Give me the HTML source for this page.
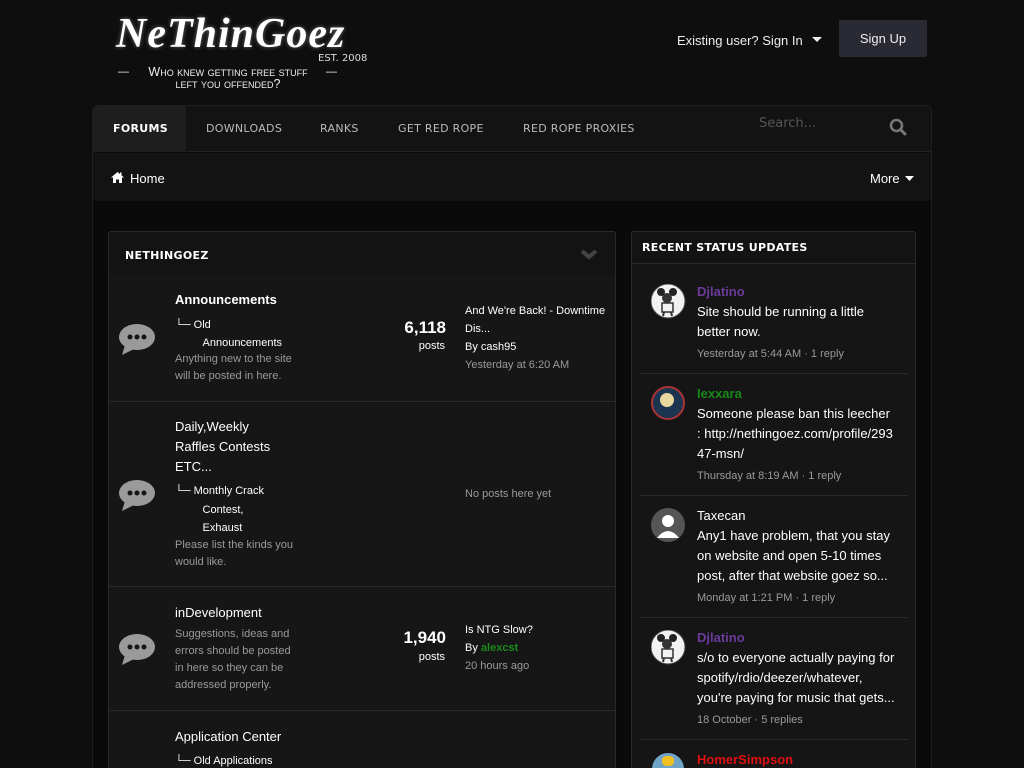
<!DOCTYPE html>
<html><head><meta charset="utf-8"><style>
*{margin:0;padding:0;box-sizing:border-box}
html,body{width:1024px;height:768px;overflow:hidden}
body{background:#0e0e0e;font-family:"Liberation Sans",Arial,sans-serif;color:#fff;position:relative}
.a{position:absolute;white-space:nowrap}
.nav{font-family:"DejaVu Sans",sans-serif;font-size:11px;color:#bbb;letter-spacing:.3px}
.t13{font-size:13px;line-height:20px}
.t11{font-size:11px;line-height:17px}
.g{color:#9a9a9a}
.sep{position:absolute;height:1px;background:#2a2a2a}
</style></head><body>
<div class="a" style="left:116px;top:10px;font-family:'Liberation Serif',serif;font-style:italic;font-weight:bold;font-size:42px;color:#fff;text-shadow:0 0 4px rgba(255,255,255,.4);letter-spacing:1px">NeThinGoez</div>
<div class="a" style="left:318px;top:53px;font-size:10px;color:#ddd;font-family:'DejaVu Sans',sans-serif">EST. 2008</div>
<div class="a" style="left:118px;top:66px;font-size:11px;color:#eee">—</div>
<div class="a" style="left:326px;top:66px;font-size:11px;color:#eee">—</div>
<div class="a" style="left:138px;top:66px;width:180px;text-align:center;font-size:12.5px;line-height:12px;color:#eee;font-family:'Liberation Sans',sans-serif;font-variant:small-caps;white-space:normal">Who knew getting free stuff<br>left you offended?</div>
<div class="a" style="left:677px;top:33px;font-size:13px;color:#eee">Existing user? Sign In</div>
<svg class="a" style="left:812px;top:37px" width="10" height="6"><path d="M0 0H10L5 5Z" fill="#eee"/></svg>
<div class="a" style="left:839px;top:20px;width:88px;height:37px;background:#2a2a34;border-radius:2px;font-size:13px;color:#eee;text-align:center;line-height:37px">Sign Up</div>
<div class="a" style="left:92px;top:105px;width:840px;height:680px;background:#0a0a0a;border:1px solid #1f1f1f;border-radius:6px 6px 0 0"></div>
<div class="a" style="left:93px;top:106px;width:838px;height:46px;background:#131313;border-radius:6px 6px 0 0;border-bottom:1px solid #222"></div>
<div class="a" style="left:93px;top:106px;width:93px;height:46px;background:#1e1e1e;border-radius:6px 0 0 0"></div>
<div class="a nav" style="left:113px;top:122px;color:#fff;font-weight:bold">FORUMS</div>
<div class="a nav" style="left:206px;top:122px">DOWNLOADS</div>
<div class="a nav" style="left:320px;top:122px">RANKS</div>
<div class="a nav" style="left:398px;top:122px">GET RED ROPE</div>
<div class="a nav" style="left:523px;top:122px">RED ROPE PROXIES</div>
<div class="a" style="left:759px;top:116px;font-family:'DejaVu Sans',sans-serif;font-size:13px;color:#555">Search...</div>
<svg class="a" style="left:889px;top:118px" width="18" height="18"><circle cx="7.5" cy="7.5" r="5.5" stroke="#777" stroke-width="2.6" fill="none"/><path d="M11.5 11.5L16 16" stroke="#777" stroke-width="3" stroke-linecap="round"/></svg>
<div class="a" style="left:93px;top:153px;width:838px;height:48px;background:#131313"></div>
<svg class="a" style="left:111px;top:172px" width="13" height="11"><path d="M6.5 0L0 5.5H2V11H5V7.5H8V11H11V5.5H13L10.5 3.3V0.5H9V2L6.5 0Z" fill="#fff"/></svg>
<div class="a" style="left:130px;top:171px;font-size:13px;color:#fff">Home</div>
<div class="a" style="left:870px;top:171px;font-size:13px;color:#fff">More</div>
<svg class="a" style="left:905px;top:176px" width="9" height="5"><path d="M0 0H9L4.5 5Z" fill="#fff"/></svg>
<div class="a" style="left:108px;top:231px;width:508px;height:540px;background:#161616;border:1px solid #2a2a2a;border-radius:3px"></div>
<div class="a" style="left:109px;top:232px;width:506px;height:43px;background:#131313"></div>
<div class="a" style="left:125px;top:249px;font-family:'DejaVu Sans',sans-serif;font-weight:bold;font-size:11px;color:#fff;letter-spacing:.3px">NETHINGOEZ</div>
<svg class="a" style="left:580px;top:249px" width="18" height="11"><path d="M2 2L9 8L16 2" stroke="#444" stroke-width="4" fill="none"/></svg>
<div class="sep" style="left:109px;top:401px;width:506px"></div>
<div class="sep" style="left:109px;top:586px;width:506px"></div>
<div class="sep" style="left:109px;top:710px;width:506px"></div>
<svg width="0" height="0" style="position:absolute"><defs><g id="bub"><ellipse cx="18" cy="13" rx="18" ry="13" fill="#9a9a9a"/><path d="M6 21L3 31L15 25Z" fill="#9a9a9a"/><circle cx="11" cy="13" r="2.5" fill="#161616"/><circle cx="18" cy="13" r="2.5" fill="#161616"/><circle cx="25" cy="13" r="2.5" fill="#161616"/></g>
<g id="mick"><circle cx="17" cy="17" r="17" fill="#f2f2f2" stroke="#444"/><circle cx="10" cy="8" r="4" fill="#222"/><circle cx="22" cy="8" r="4" fill="#222"/><ellipse cx="16" cy="14" rx="5" ry="5" fill="#333"/><path d="M11 19H22V28H11Z" fill="none" stroke="#333" stroke-width="1.5"/><path d="M13 28L12 32M20 28L21 32" stroke="#333" stroke-width="2"/></g></defs></svg>
<svg class="a" style="left:119px;top:324px" width="37" height="32"><use href="#bub"/></svg>
<svg class="a" style="left:119px;top:480px" width="37" height="32"><use href="#bub"/></svg>
<svg class="a" style="left:119px;top:634px" width="37" height="32"><use href="#bub"/></svg>
<div class="a" style="left:175px;top:292px;font-size:13px;font-weight:bold">Announcements</div>
<div class="a t11" style="left:175px;top:316px;line-height:18px">└─ Old<br>&nbsp;&nbsp;&nbsp;&nbsp;&nbsp;&nbsp;&nbsp;&nbsp;&nbsp;Announcements</div>
<div class="a t11 g" style="left:175px;top:351px">Anything new to the site<br>will be posted in here.</div>
<div class="a" style="left:380px;top:318px;width:66px;text-align:right;font-size:17px;font-weight:bold">6,118</div>
<div class="a" style="left:380px;top:340px;width:65px;text-align:right;font-size:11px">posts</div>
<div class="a t11" style="left:465px;top:302px;line-height:18px">And We're Back! - Downtime<br>Dis...<br>By cash95<br><span class="g">Yesterday at 6:20 AM</span></div>
<div class="a t13" style="left:175px;top:417px">Daily,Weekly<br>Raffles Contests<br>ETC...</div>
<div class="a t11" style="left:175px;top:482px;line-height:18.5px">└─ Monthly Crack<br>&nbsp;&nbsp;&nbsp;&nbsp;&nbsp;&nbsp;&nbsp;&nbsp;&nbsp;Contest,<br>&nbsp;&nbsp;&nbsp;&nbsp;&nbsp;&nbsp;&nbsp;&nbsp;&nbsp;Exhaust</div>
<div class="a t11 g" style="left:175px;top:537px">Please list the kinds you<br>would like.</div>
<div class="a t11 g" style="left:465px;top:486px">No posts here yet</div>
<div class="a" style="left:175px;top:605px;font-size:13px">inDevelopment</div>
<div class="a t11 g" style="left:175px;top:626px">Suggestions, ideas and<br>errors should be posted<br>in here so they can be<br>addressed properly.</div>
<div class="a" style="left:380px;top:628px;width:66px;text-align:right;font-size:17px;font-weight:bold">1,940</div>
<div class="a" style="left:380px;top:651px;width:65px;text-align:right;font-size:11px">posts</div>
<div class="a t11" style="left:465px;top:621px;line-height:18px">Is NTG Slow?<br>By <b style="color:#1a8a1a">alexcst</b><br><span class="g">20 hours ago</span></div>
<div class="a" style="left:175px;top:729px;font-size:13px">Application Center</div>
<div class="a t11" style="left:175px;top:753px">└─ Old Applications</div>
<div class="a" style="left:631px;top:231px;width:285px;height:540px;background:#151515;border:1px solid #2a2a2a;border-radius:3px"></div>
<div class="a" style="left:632px;top:232px;width:283px;height:32px;background:#131313;border-bottom:1px solid #2a2a2a"></div>
<div class="a" style="left:642px;top:241px;font-family:'DejaVu Sans',sans-serif;font-weight:bold;font-size:11px;color:#fff;letter-spacing:.3px">RECENT STATUS UPDATES</div>
<div class="sep" style="left:640px;top:373px;width:268px"></div>
<div class="sep" style="left:640px;top:495px;width:268px"></div>
<div class="sep" style="left:640px;top:617px;width:268px"></div>
<div class="sep" style="left:640px;top:739px;width:268px"></div>
<svg class="a" style="left:651px;top:284px" width="35" height="35"><use href="#mick"/></svg>
<div class="a" style="left:651px;top:386px;width:34px;height:34px;border-radius:50%;background:#1b3550;border:2px solid #a33"></div>
<div class="a" style="left:660px;top:393px;width:14px;height:14px;border-radius:50%;background:#e8d8a0"></div>
<svg class="a" style="left:651px;top:508px" width="34" height="34"><circle cx="17" cy="17" r="17" fill="#555"/><circle cx="17" cy="13" r="6" fill="#fff"/><path d="M6 30Q17 16 28 30Z" fill="#fff"/></svg>
<svg class="a" style="left:651px;top:630px" width="35" height="35"><use href="#mick"/></svg>
<div class="a" style="left:651px;top:752px;width:34px;height:34px;border-radius:50%;background:#6fa3c8;border:1px solid #111"></div>
<div class="a" style="left:662px;top:756px;width:12px;height:10px;background:#f0c020;border-radius:40%"></div>
<div class="a t13" style="left:697px;top:282px"><b style="color:#6a3b9a">Djlatino</b><br>Site should be running a little<br>better now.</div>
<div class="a t11 g" style="left:697px;top:346px">Yesterday at 5:44 AM · 1 reply</div>
<div class="a t13" style="left:697px;top:384px"><b style="color:#1a8a1a">Iexxara</b><br>Someone please ban this leecher<br>: http://nethingoez.com/profile/293<br>47-msn/</div>
<div class="a t11 g" style="left:697px;top:468px">Thursday at 8:19 AM · 1 reply</div>
<div class="a t13" style="left:697px;top:506px">Taxecan<br>Any1 have problem, that you stay<br>on website and open 5-10 times<br>post, after that website goez so...</div>
<div class="a t11 g" style="left:697px;top:590px">Monday at 1:21 PM · 1 reply</div>
<div class="a t13" style="left:697px;top:628px"><b style="color:#6a3b9a">Djlatino</b><br>s/o to everyone actually paying for<br>spotify/rdio/deezer/whatever,<br>you're paying for music that gets...</div>
<div class="a t11 g" style="left:697px;top:712px">18 October · 5 replies</div>
<div class="a t13" style="left:697px;top:750px"><b style="color:#e01010">HomerSimpson</b></div>
</body></html>
